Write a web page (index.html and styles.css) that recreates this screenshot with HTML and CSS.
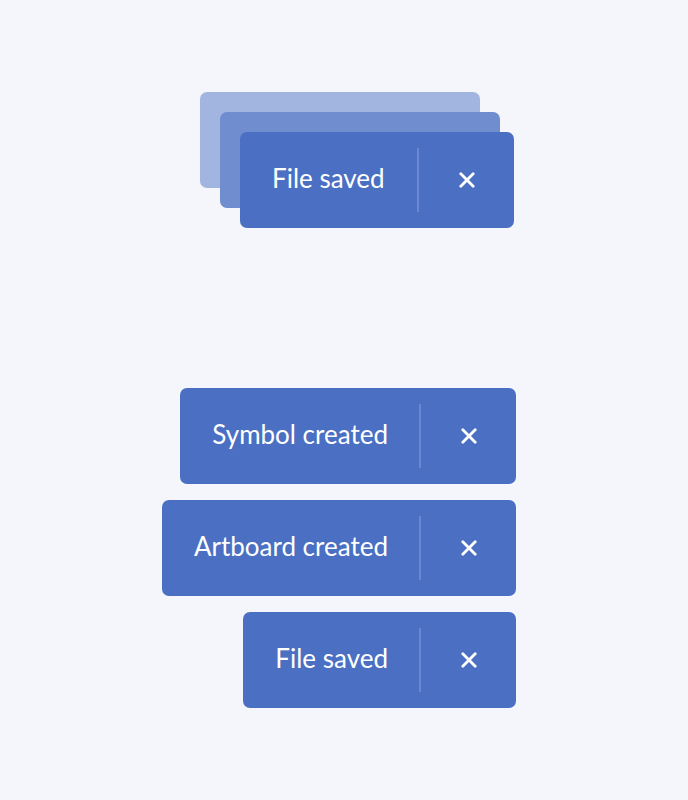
FILE: index.html
```html
<!DOCTYPE html>
<html>
<head>
<meta charset="utf-8">
<link rel="stylesheet" href="styles.css">
</head>
<body>
<div class="page">
  <div class="stack">
    <div class="card card-back"></div>
    <div class="card card-mid"></div>
    <div class="toast card-front">
      <span class="label">File saved</span>
      <span class="divider"></span>
      <span class="close"><svg width="16" height="16" viewBox="0 0 16 16"><path d="M1.8 1.8 L14.2 14.2 M14.2 1.8 L1.8 14.2" stroke="#fff" stroke-width="2.8" stroke-linecap="round"/></svg></span>
    </div>
  </div>
  <div class="list">
    <div class="toast">
      <span class="label">Symbol created</span>
      <span class="divider"></span>
      <span class="close"><svg width="16" height="16" viewBox="0 0 16 16"><path d="M1.8 1.8 L14.2 14.2 M14.2 1.8 L1.8 14.2" stroke="#fff" stroke-width="2.8" stroke-linecap="round"/></svg></span>
    </div>
    <div class="toast">
      <span class="label">Artboard created</span>
      <span class="divider"></span>
      <span class="close"><svg width="16" height="16" viewBox="0 0 16 16"><path d="M1.8 1.8 L14.2 14.2 M14.2 1.8 L1.8 14.2" stroke="#fff" stroke-width="2.8" stroke-linecap="round"/></svg></span>
    </div>
    <div class="toast">
      <span class="label">File saved</span>
      <span class="divider"></span>
      <span class="close"><svg width="16" height="16" viewBox="0 0 16 16"><path d="M1.8 1.8 L14.2 14.2 M14.2 1.8 L1.8 14.2" stroke="#fff" stroke-width="2.8" stroke-linecap="round"/></svg></span>
    </div>
  </div>
</div>
</body>
</html>
```
FILE: styles.css
```css
html, body {
  margin: 0;
  padding: 0;
  background: #f5f6fb;
}
body {
  font-family: "Lato", "Open Sans", sans-serif;
  width: 688px;
  height: 800px;
}
.page {
  padding-top: 92px;
}
.stack {
  display: grid;
  margin-left: 200px;
  width: 314px;
}
.stack > * {
  grid-area: 1 / 1;
}
.card {
  width: 280px;
  height: 96px;
  border-radius: 7px;
}
.card-back {
  background: #a2b5e1;
}
.card-mid {
  background: #708dcf;
  margin: 20px 0 0 20px;
}
.card-front {
  margin: 40px 0 0 40px;
  width: 274px;
  justify-self: start;
}
.list {
  margin-top: 160px;
  width: 516px;
  display: flex;
  flex-direction: column;
  align-items: flex-end;
  gap: 16px;
}
.toast {
  display: flex;
  align-items: stretch;
  height: 96px;
  background: #4a6fc3;
  border-radius: 7px;
  color: #fff;
  box-sizing: border-box;
}
.label {
  font-size: 26px;
  line-height: 92px;
  padding: 0 31px 4px 32px;
  white-space: nowrap;
  flex: 1;
}
.divider {
  width: 2px;
  margin: 16px 0;
  background: #6a88d0;
}
.close {
  width: 95px;
  display: flex;
  align-items: center;
  justify-content: center;
}
```
